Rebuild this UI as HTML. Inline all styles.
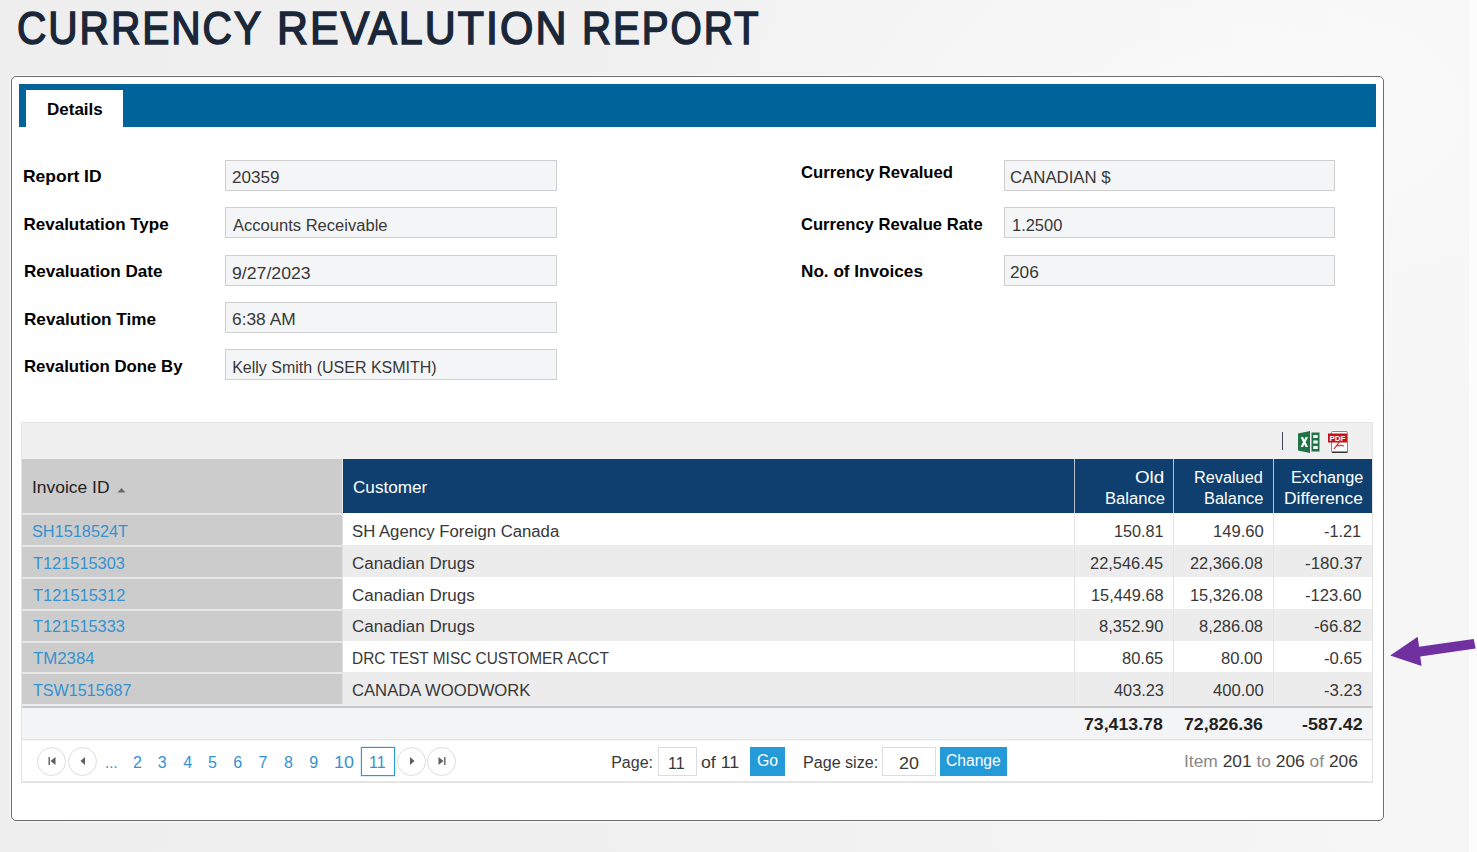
<!DOCTYPE html>
<html><head><meta charset="utf-8"><style>
html,body{margin:0;padding:0;}
body{width:1477px;height:852px;overflow:hidden;position:relative;font-family:"Liberation Sans",sans-serif;
background:radial-gradient(ellipse 600px 320px at 1250px 110px,rgba(250,250,250,0.9),rgba(250,250,250,0)),linear-gradient(90deg,#eeeeee 0%,#f0f0f0 40%,#f3f3f3 75%,#f6f6f6 94%,#f6f6f6 100%);}
.t{position:absolute;white-space:nowrap;}
.r{position:absolute;box-sizing:content-box;}
.inp{position:absolute;height:29px;border:1px solid #cfcfcf;background:#f4f5f7;}
.circ{position:absolute;width:27px;height:27px;border:1px solid #dcdcdc;border-radius:50%;background:#fff;}
.strip{position:absolute;left:1469px;top:0;width:8px;height:852px;background:#fcfcfc;}
</style></head><body>
<div class="strip"></div>
<div class="t" style="left:17.20px;top:-1px;font-size:46px;font-weight:400;line-height:58px;color:#1b2739;transform:scaleX(0.8839);transform-origin:0 0;-webkit-text-stroke:1.6px #1b2739;letter-spacing:2.2px;text-shadow:1px 1px 1px #fff,0 0 1px #fff;">CURRENCY</div>
<div class="t" style="left:276.70px;top:-1px;font-size:46px;font-weight:400;line-height:58px;color:#1b2739;transform:scaleX(0.9326);transform-origin:0 0;-webkit-text-stroke:1.6px #1b2739;letter-spacing:2.2px;text-shadow:1px 1px 1px #fff,0 0 1px #fff;">REVALUTION</div>
<div class="t" style="left:581.90px;top:-1px;font-size:46px;font-weight:400;line-height:58px;color:#1b2739;transform:scaleX(0.8749);transform-origin:0 0;-webkit-text-stroke:1.6px #1b2739;letter-spacing:2.2px;text-shadow:1px 1px 1px #fff,0 0 1px #fff;">REPORT</div>
<div class="r" style="left:11px;top:76px;width:1371px;height:743px;border:1px solid #6e6e6e;border-radius:5px;background:#fff;box-shadow:0 0 2px 1px #fafafa"></div>
<div class="r" style="left:19px;top:84px;width:1357px;height:43px;background:#00649b;"></div>
<div class="r" style="left:26px;top:90px;width:97px;height:37px;background:#fff;"></div>
<div class="t" style="left:47.00px;top:99px;font-size:17px;font-weight:700;line-height:21px;color:#000;">Details</div>
<div class="t" style="left:23.00px;top:166px;font-size:17px;font-weight:700;line-height:21px;color:#000;transform:scaleX(1.0267);transform-origin:0 0;">Report ID</div>
<div class="t" style="left:23.50px;top:214px;font-size:17px;font-weight:700;line-height:21px;color:#000;">Revalutation Type</div>
<div class="t" style="left:23.50px;top:261px;font-size:17px;font-weight:700;line-height:21px;color:#000;transform:scaleX(1.0037);transform-origin:0 0;">Revaluation Date</div>
<div class="t" style="left:23.50px;top:309px;font-size:17px;font-weight:700;line-height:21px;color:#000;transform:scaleX(1.0078);transform-origin:0 0;">Revalution Time</div>
<div class="t" style="left:23.50px;top:356px;font-size:17px;font-weight:700;line-height:21px;color:#000;transform:scaleX(0.9874);transform-origin:0 0;">Revalution Done By</div>
<div class="t" style="left:801.00px;top:162px;font-size:17px;font-weight:700;line-height:21px;color:#000;transform:scaleX(0.9804);transform-origin:0 0;">Currency Revalued</div>
<div class="t" style="left:801.00px;top:214px;font-size:17px;font-weight:700;line-height:21px;color:#000;transform:scaleX(0.9757);transform-origin:0 0;">Currency Revalue Rate</div>
<div class="t" style="left:801.00px;top:261px;font-size:17px;font-weight:700;line-height:21px;color:#000;transform:scaleX(1.0084);transform-origin:0 0;">No. of Invoices</div>
<div class="inp" style="left:225px;top:160px;width:330px;"></div>
<div class="inp" style="left:225px;top:207px;width:330px;"></div>
<div class="inp" style="left:225px;top:255px;width:330px;"></div>
<div class="inp" style="left:225px;top:302px;width:330px;"></div>
<div class="inp" style="left:225px;top:349px;width:330px;"></div>
<div class="inp" style="left:1004px;top:160px;width:329px;"></div>
<div class="inp" style="left:1004px;top:207px;width:329px;"></div>
<div class="inp" style="left:1004px;top:255px;width:329px;"></div>
<div class="t" style="left:232.00px;top:168px;font-size:16px;font-weight:400;line-height:20px;color:#383838;transform:scaleX(1.0698);transform-origin:0 0;">20359</div>
<div class="t" style="left:233.20px;top:216px;font-size:16px;font-weight:400;line-height:20px;color:#383838;transform:scaleX(1.0342);transform-origin:0 0;">Accounts Receivable</div>
<div class="t" style="left:232.20px;top:264px;font-size:16px;font-weight:400;line-height:20px;color:#383838;transform:scaleX(1.1057);transform-origin:0 0;">9/27/2023</div>
<div class="t" style="left:232.20px;top:310px;font-size:16px;font-weight:400;line-height:20px;color:#383838;transform:scaleX(1.0842);transform-origin:0 0;">6:38 AM</div>
<div class="t" style="left:232.20px;top:358px;font-size:16px;font-weight:400;line-height:20px;color:#383838;">Kelly Smith (USER KSMITH)</div>
<div class="t" style="left:1010.40px;top:168px;font-size:16px;font-weight:400;line-height:20px;color:#383838;transform:scaleX(1.0474);transform-origin:0 0;">CANADIAN $</div>
<div class="t" style="left:1011.70px;top:216px;font-size:16px;font-weight:400;line-height:20px;color:#383838;transform:scaleX(1.0277);transform-origin:0 0;">1.2500</div>
<div class="t" style="left:1010.40px;top:263px;font-size:16px;font-weight:400;line-height:20px;color:#383838;transform:scaleX(1.076);transform-origin:0 0;">206</div>
<div class="r" style="left:21px;top:422px;width:1350px;height:36px;background:#f0f0f0;border:1px solid #e4e4e4;border-bottom:none"></div>
<div class="r" style="left:1282px;top:432px;width:1px;height:18px;background:#3c4a5c;"></div>
<svg class="r" style="left:1297px;top:430px" width="24" height="24" viewBox="0 0 24 24">
<path d="M1 3.5 L13 1 L13 23 L1 20.5 Z" fill="#1f7346"/>
<rect x="14.5" y="2.5" width="8" height="19" fill="#1f7346"/>
<rect x="16.3" y="5" width="4.4" height="3" fill="#fff"/>
<rect x="16.3" y="10.5" width="4.4" height="3" fill="#fff"/>
<rect x="16.3" y="16" width="4.4" height="3" fill="#fff"/>
<path d="M3.6 7 L6 7 L7.3 9.8 L8.6 7 L11 7 L8.6 12 L11 17 L8.6 17 L7.3 14.2 L6 17 L3.6 17 L6 12 Z" fill="#fff"/>
</svg>
<svg class="r" style="left:1327px;top:430px" width="24" height="24" viewBox="0 0 24 24">
<rect x="4.5" y="1.5" width="16" height="21" rx="1" fill="#fff" stroke="#8a8a8a" stroke-width="1"/>
<rect x="5" y="21.5" width="15.5" height="1.5" fill="#333"/>
<rect x="1" y="3.5" width="19" height="9" fill="#c4111b"/>
<text x="10.5" y="11" font-family="Liberation Sans" font-weight="700" font-size="8" fill="#fff" text-anchor="middle">PDF</text>
<path d="M7 19 C10 15 12 13 13 11 M10 16 C13 15 15 15 17 16" stroke="#e0333a" stroke-width="1.3" fill="none"/>
</svg>
<div class="r" style="left:22px;top:459px;width:1350px;height:54px;background:#0f3f6f;"></div>
<div class="r" style="left:22px;top:459px;width:320px;height:54px;background:#cccccc;"></div>
<div class="r" style="left:342px;top:459px;width:1px;height:54px;background:#ececec;"></div>
<div class="r" style="left:1074px;top:459px;width:1px;height:54px;background:#b9c3cf;"></div>
<div class="r" style="left:1173px;top:459px;width:1px;height:54px;background:#b9c3cf;"></div>
<div class="r" style="left:1273px;top:459px;width:1px;height:54px;background:#b9c3cf;"></div>
<div class="t" style="left:31.60px;top:478px;font-size:16px;font-weight:400;line-height:20px;color:#222;transform:scaleX(1.0897);transform-origin:0 0;">Invoice ID</div>
<svg class="r" style="left:117px;top:487px" width="9" height="6"><path d="M0.5 5.5 L4.5 1 L8.5 5.5 Z" fill="#6a6a6a"/></svg>
<div class="t" style="left:352.50px;top:478px;font-size:16px;font-weight:400;line-height:20px;color:#fff;transform:scaleX(1.0706);transform-origin:0 0;">Customer</div>
<div class="t" style="left:1135.30px;top:468px;font-size:16px;font-weight:400;line-height:20px;color:#fff;transform:scaleX(1.1739);transform-origin:0 0;">Old</div>
<div class="t" style="left:1104.80px;top:489px;font-size:16px;font-weight:400;line-height:20px;color:#fff;transform:scaleX(1.0375);transform-origin:0 0;">Balance</div>
<div class="t" style="left:1193.60px;top:468px;font-size:16px;font-weight:400;line-height:20px;color:#fff;transform:scaleX(1.0167);transform-origin:0 0;">Revalued</div>
<div class="t" style="left:1203.80px;top:489px;font-size:16px;font-weight:400;line-height:20px;color:#fff;transform:scaleX(1.0268);transform-origin:0 0;">Balance</div>
<div class="t" style="left:1290.50px;top:468px;font-size:16px;font-weight:400;line-height:20px;color:#fff;transform:scaleX(1.0143);transform-origin:0 0;">Exchange</div>
<div class="t" style="left:1284.40px;top:489px;font-size:16px;font-weight:400;line-height:20px;color:#fff;transform:scaleX(1.0859);transform-origin:0 0;">Difference</div>
<div class="r" style="left:22px;top:513px;width:1350px;height:32px;background:#ffffff;"></div>
<div class="r" style="left:22px;top:513px;width:320px;height:32px;background:#cccccc;"></div>
<div class="r" style="left:22px;top:513px;width:320px;height:2px;background:#e8e8e8;"></div>
<div class="r" style="left:342px;top:513px;width:1px;height:32px;background:#e2e2e2;"></div>
<div class="r" style="left:1074px;top:513px;width:1px;height:32px;background:#e4e4e4;"></div>
<div class="r" style="left:1173px;top:513px;width:1px;height:32px;background:#e4e4e4;"></div>
<div class="r" style="left:1273px;top:513px;width:1px;height:32px;background:#e4e4e4;"></div>
<div class="t" style="left:32.30px;top:522px;font-size:16px;font-weight:400;line-height:20px;color:#3592d0;transform:scaleX(1.0183);transform-origin:0 0;">SH1518524T</div>
<div class="t" style="left:351.80px;top:522px;font-size:16px;font-weight:400;line-height:20px;color:#383838;transform:scaleX(1.0447);transform-origin:0 0;">SH Agency Foreign Canada</div>
<div class="t" style="left:1113.60px;top:522px;font-size:16px;font-weight:400;line-height:20px;color:#383838;transform:scaleX(1.0106);transform-origin:0 0;">150.81</div>
<div class="t" style="left:1212.80px;top:522px;font-size:16px;font-weight:400;line-height:20px;color:#383838;transform:scaleX(1.0362);transform-origin:0 0;">149.60</div>
<div class="t" style="left:1323.90px;top:522px;font-size:16px;font-weight:400;line-height:20px;color:#383838;transform:scaleX(1.02);transform-origin:0 0;">-1.21</div>
<div class="r" style="left:22px;top:545px;width:1350px;height:32px;background:#ececec;"></div>
<div class="r" style="left:22px;top:545px;width:320px;height:32px;background:#cccccc;"></div>
<div class="r" style="left:22px;top:545px;width:320px;height:2px;background:#e8e8e8;"></div>
<div class="r" style="left:342px;top:545px;width:1px;height:32px;background:#e2e2e2;"></div>
<div class="r" style="left:1074px;top:545px;width:1px;height:32px;background:#e4e4e4;"></div>
<div class="r" style="left:1173px;top:545px;width:1px;height:32px;background:#e4e4e4;"></div>
<div class="r" style="left:1273px;top:545px;width:1px;height:32px;background:#e4e4e4;"></div>
<div class="t" style="left:33.30px;top:554px;font-size:16px;font-weight:400;line-height:20px;color:#3592d0;transform:scaleX(1.0225);transform-origin:0 0;">T121515303</div>
<div class="t" style="left:351.80px;top:554px;font-size:16px;font-weight:400;line-height:20px;color:#383838;transform:scaleX(1.0614);transform-origin:0 0;">Canadian Drugs</div>
<div class="t" style="left:1090.20px;top:554px;font-size:16px;font-weight:400;line-height:20px;color:#383838;transform:scaleX(1.0257);transform-origin:0 0;">22,546.45</div>
<div class="t" style="left:1189.90px;top:554px;font-size:16px;font-weight:400;line-height:20px;color:#383838;transform:scaleX(1.0229);transform-origin:0 0;">22,366.08</div>
<div class="t" style="left:1305.40px;top:554px;font-size:16px;font-weight:400;line-height:20px;color:#383838;transform:scaleX(1.0596);transform-origin:0 0;">-180.37</div>
<div class="r" style="left:22px;top:577px;width:1350px;height:32px;background:#ffffff;"></div>
<div class="r" style="left:22px;top:577px;width:320px;height:32px;background:#cccccc;"></div>
<div class="r" style="left:22px;top:577px;width:320px;height:2px;background:#e8e8e8;"></div>
<div class="r" style="left:342px;top:577px;width:1px;height:32px;background:#e2e2e2;"></div>
<div class="r" style="left:1074px;top:577px;width:1px;height:32px;background:#e4e4e4;"></div>
<div class="r" style="left:1173px;top:577px;width:1px;height:32px;background:#e4e4e4;"></div>
<div class="r" style="left:1273px;top:577px;width:1px;height:32px;background:#e4e4e4;"></div>
<div class="t" style="left:33.30px;top:586px;font-size:16px;font-weight:400;line-height:20px;color:#3592d0;transform:scaleX(1.027);transform-origin:0 0;">T121515312</div>
<div class="t" style="left:351.80px;top:586px;font-size:16px;font-weight:400;line-height:20px;color:#383838;transform:scaleX(1.0614);transform-origin:0 0;">Canadian Drugs</div>
<div class="t" style="left:1090.60px;top:586px;font-size:16px;font-weight:400;line-height:20px;color:#383838;transform:scaleX(1.02);transform-origin:0 0;">15,449.68</div>
<div class="t" style="left:1189.90px;top:586px;font-size:16px;font-weight:400;line-height:20px;color:#383838;transform:scaleX(1.0229);transform-origin:0 0;">15,326.08</div>
<div class="t" style="left:1305.40px;top:586px;font-size:16px;font-weight:400;line-height:20px;color:#383838;transform:scaleX(1.0396);transform-origin:0 0;">-123.60</div>
<div class="r" style="left:22px;top:609px;width:1350px;height:32px;background:#ececec;"></div>
<div class="r" style="left:22px;top:609px;width:320px;height:32px;background:#cccccc;"></div>
<div class="r" style="left:22px;top:609px;width:320px;height:2px;background:#e8e8e8;"></div>
<div class="r" style="left:342px;top:609px;width:1px;height:32px;background:#e2e2e2;"></div>
<div class="r" style="left:1074px;top:609px;width:1px;height:32px;background:#e4e4e4;"></div>
<div class="r" style="left:1173px;top:609px;width:1px;height:32px;background:#e4e4e4;"></div>
<div class="r" style="left:1273px;top:609px;width:1px;height:32px;background:#e4e4e4;"></div>
<div class="t" style="left:33.30px;top:617px;font-size:16px;font-weight:400;line-height:20px;color:#3592d0;transform:scaleX(1.0225);transform-origin:0 0;">T121515333</div>
<div class="t" style="left:351.80px;top:617px;font-size:16px;font-weight:400;line-height:20px;color:#383838;transform:scaleX(1.0614);transform-origin:0 0;">Canadian Drugs</div>
<div class="t" style="left:1099.00px;top:617px;font-size:16px;font-weight:400;line-height:20px;color:#383838;transform:scaleX(1.0328);transform-origin:0 0;">8,352.90</div>
<div class="t" style="left:1198.80px;top:617px;font-size:16px;font-weight:400;line-height:20px;color:#383838;transform:scaleX(1.0279);transform-origin:0 0;">8,286.08</div>
<div class="t" style="left:1314.30px;top:617px;font-size:16px;font-weight:400;line-height:20px;color:#383838;transform:scaleX(1.05);transform-origin:0 0;">-66.82</div>
<div class="r" style="left:22px;top:641px;width:1350px;height:31px;background:#ffffff;"></div>
<div class="r" style="left:22px;top:641px;width:320px;height:31px;background:#cccccc;"></div>
<div class="r" style="left:22px;top:641px;width:320px;height:2px;background:#e8e8e8;"></div>
<div class="r" style="left:342px;top:641px;width:1px;height:31px;background:#e2e2e2;"></div>
<div class="r" style="left:1074px;top:641px;width:1px;height:31px;background:#e4e4e4;"></div>
<div class="r" style="left:1173px;top:641px;width:1px;height:31px;background:#e4e4e4;"></div>
<div class="r" style="left:1273px;top:641px;width:1px;height:31px;background:#e4e4e4;"></div>
<div class="t" style="left:33.30px;top:649px;font-size:16px;font-weight:400;line-height:20px;color:#3592d0;transform:scaleX(1.05);transform-origin:0 0;">TM2384</div>
<div class="t" style="left:351.80px;top:649px;font-size:16px;font-weight:400;line-height:20px;color:#383838;transform:scaleX(0.963);transform-origin:0 0;">DRC TEST MISC CUSTOMER ACCT</div>
<div class="t" style="left:1121.80px;top:649px;font-size:16px;font-weight:400;line-height:20px;color:#383838;transform:scaleX(1.0308);transform-origin:0 0;">80.65</div>
<div class="t" style="left:1221.00px;top:649px;font-size:16px;font-weight:400;line-height:20px;color:#383838;transform:scaleX(1.0385);transform-origin:0 0;">80.00</div>
<div class="t" style="left:1323.90px;top:649px;font-size:16px;font-weight:400;line-height:20px;color:#383838;transform:scaleX(1.0457);transform-origin:0 0;">-0.65</div>
<div class="r" style="left:22px;top:672px;width:1350px;height:32px;background:#ececec;"></div>
<div class="r" style="left:22px;top:672px;width:320px;height:32px;background:#cccccc;"></div>
<div class="r" style="left:22px;top:672px;width:320px;height:2px;background:#e8e8e8;"></div>
<div class="r" style="left:342px;top:672px;width:1px;height:32px;background:#e2e2e2;"></div>
<div class="r" style="left:1074px;top:672px;width:1px;height:32px;background:#e4e4e4;"></div>
<div class="r" style="left:1173px;top:672px;width:1px;height:32px;background:#e4e4e4;"></div>
<div class="r" style="left:1273px;top:672px;width:1px;height:32px;background:#e4e4e4;"></div>
<div class="t" style="left:33.30px;top:681px;font-size:16px;font-weight:400;line-height:20px;color:#3592d0;transform:scaleX(1.0072);transform-origin:0 0;">TSW1515687</div>
<div class="t" style="left:351.80px;top:681px;font-size:16px;font-weight:400;line-height:20px;color:#383838;transform:scaleX(1.04);transform-origin:0 0;">CANADA WOODWORK</div>
<div class="t" style="left:1113.50px;top:681px;font-size:16px;font-weight:400;line-height:20px;color:#383838;transform:scaleX(1.0208);transform-origin:0 0;">403.23</div>
<div class="t" style="left:1212.70px;top:681px;font-size:16px;font-weight:400;line-height:20px;color:#383838;transform:scaleX(1.0375);transform-origin:0 0;">400.00</div>
<div class="t" style="left:1323.90px;top:681px;font-size:16px;font-weight:400;line-height:20px;color:#383838;transform:scaleX(1.0457);transform-origin:0 0;">-3.23</div>
<div class="r" style="left:22px;top:704px;width:1350px;height:2px;background:#eeeeee;"></div>
<div class="r" style="left:22px;top:706px;width:1350px;height:2px;background:#c9c9c9;"></div>
<div class="r" style="left:22px;top:708px;width:1350px;height:31px;background:#f3f4f6;"></div>
<div class="r" style="left:22px;top:739px;width:1350px;height:1px;background:#e2e2e2;"></div>
<div class="r" style="left:22px;top:740px;width:1350px;height:1px;background:#f6f6f6;"></div>
<div class="t" style="left:1084.20px;top:714px;font-size:17px;font-weight:700;line-height:21px;color:#222;transform:scaleX(1.0419);transform-origin:0 0;">73,413.78</div>
<div class="t" style="left:1183.70px;top:714px;font-size:17px;font-weight:700;line-height:21px;color:#222;transform:scaleX(1.0432);transform-origin:0 0;">72,826.36</div>
<div class="t" style="left:1301.50px;top:714px;font-size:17px;font-weight:700;line-height:21px;color:#222;transform:scaleX(1.0518);transform-origin:0 0;">-587.42</div>
<div class="r" style="left:22px;top:741px;width:1350px;height:40px;background:#ffffff;"></div>
<div class="r" style="left:21px;top:781px;width:1352px;height:2px;background:#e4e4e4;"></div>
<div class="r" style="left:21px;top:422px;width:1px;height:361px;background:#e4e4e4;"></div>
<div class="r" style="left:1372px;top:422px;width:1px;height:361px;background:#e4e4e4;"></div>
<div class="circ" style="left:37.0px;top:746.5px"></div>
<div class="circ" style="left:67.5px;top:746.5px"></div>
<div class="circ" style="left:396.5px;top:746.5px"></div>
<div class="circ" style="left:426.5px;top:746.5px"></div>
<svg class="r" style="left:47px;top:756px" width="10" height="10"><rect x="1.5" y="1" width="1.4" height="8" fill="#5e5e5e"/><path d="M8.5 1 L3.5 5 L8.5 9 Z" fill="#5e5e5e"/></svg>
<svg class="r" style="left:78px;top:756px" width="10" height="10"><path d="M7 1 L2.5 5 L7 9 Z" fill="#5e5e5e"/></svg>
<svg class="r" style="left:407px;top:756px" width="10" height="10"><path d="M3 1 L7.5 5 L3 9 Z" fill="#5e5e5e"/></svg>
<svg class="r" style="left:437px;top:756px" width="10" height="10"><path d="M1.5 1 L6.5 5 L1.5 9 Z" fill="#5e5e5e"/><rect x="7.1" y="1" width="1.4" height="8" fill="#5e5e5e"/></svg>
<div class="t" style="left:105.00px;top:753px;font-size:16px;font-weight:400;line-height:20px;color:#3592d0;transform:scaleX(0.9455);transform-origin:0 0;">...</div>
<div class="t" style="left:133.10px;top:753px;font-size:16px;font-weight:400;line-height:20px;color:#3592d0;">2</div>
<div class="t" style="left:157.85px;top:753px;font-size:16px;font-weight:400;line-height:20px;color:#3592d0;">3</div>
<div class="t" style="left:183.20px;top:753px;font-size:16px;font-weight:400;line-height:20px;color:#3592d0;">4</div>
<div class="t" style="left:207.95px;top:753px;font-size:16px;font-weight:400;line-height:20px;color:#3592d0;">5</div>
<div class="t" style="left:233.25px;top:753px;font-size:16px;font-weight:400;line-height:20px;color:#3592d0;">6</div>
<div class="t" style="left:258.60px;top:753px;font-size:16px;font-weight:400;line-height:20px;color:#3592d0;">7</div>
<div class="t" style="left:283.90px;top:753px;font-size:16px;font-weight:400;line-height:20px;color:#3592d0;">8</div>
<div class="t" style="left:309.25px;top:753px;font-size:16px;font-weight:400;line-height:20px;color:#3592d0;">9</div>
<div class="t" style="left:334.30px;top:753px;font-size:16px;font-weight:400;line-height:20px;color:#3592d0;transform:scaleX(1.1187);transform-origin:0 0;">10</div>
<div class="t" style="left:369.30px;top:753px;font-size:16px;font-weight:400;line-height:20px;color:#3592d0;transform:scaleX(0.9933);transform-origin:0 0;">11</div>
<div class="r" style="left:361px;top:747px;width:32px;height:27px;border:1px solid #2a9ad8;box-shadow:0 0 0 0.5px rgba(42,154,216,0.35)"></div>
<div class="t" style="left:611.20px;top:753px;font-size:16px;font-weight:400;line-height:20px;color:#383838;">Page:</div>
<div class="r" style="left:658px;top:747px;width:37px;height:27px;border:1px solid #dcdcdc;background:#fff"></div>
<div class="t" style="left:668.00px;top:754px;font-size:16px;font-weight:400;line-height:20px;color:#383838;">11</div>
<div class="t" style="left:701.20px;top:753px;font-size:16px;font-weight:400;line-height:20px;color:#383838;transform:scaleX(1.1091);transform-origin:0 0;">of 11</div>
<div class="r" style="left:750px;top:747px;width:35px;height:29px;background:#249ad8;"></div>
<div class="t" style="left:756.70px;top:751px;font-size:16px;font-weight:400;line-height:20px;color:#fff;transform:scaleX(0.985);transform-origin:0 0;">Go</div>
<div class="t" style="left:803.00px;top:753px;font-size:16px;font-weight:400;line-height:20px;color:#383838;transform:scaleX(1.0056);transform-origin:0 0;">Page size:</div>
<div class="r" style="left:882px;top:747px;width:52px;height:27px;border:1px solid #dcdcdc;background:#fff"></div>
<div class="t" style="left:898.80px;top:754px;font-size:16px;font-weight:400;line-height:20px;color:#383838;transform:scaleX(1.1188);transform-origin:0 0;">20</div>
<div class="r" style="left:940px;top:747px;width:67px;height:29px;background:#249ad8;"></div>
<div class="t" style="left:946.30px;top:751px;font-size:16px;font-weight:400;line-height:20px;color:#fff;transform:scaleX(0.9764);transform-origin:0 0;">Change</div>
<div class="t" style="left:1183.70px;top:752px;font-size:16px;font-weight:400;line-height:20px;color:#383838;transform:scaleX(1.0861);transform-origin:0 0;"><span style="color:#888">Item</span> 201 <span style="color:#888">to</span> 206 <span style="color:#888">of</span> 206</div>
<svg class="r" style="left:1380px;top:620px" width="97" height="60" viewBox="1380 620 97 60">
<path d="M1390.2 655.6 L1417.7 636.8 L1419.1 646.8 L1473.7 639 L1475.7 648.5 L1420.2 656.5 L1421.6 666.1 Z" fill="#7030a0"/>
</svg>
</body></html>
